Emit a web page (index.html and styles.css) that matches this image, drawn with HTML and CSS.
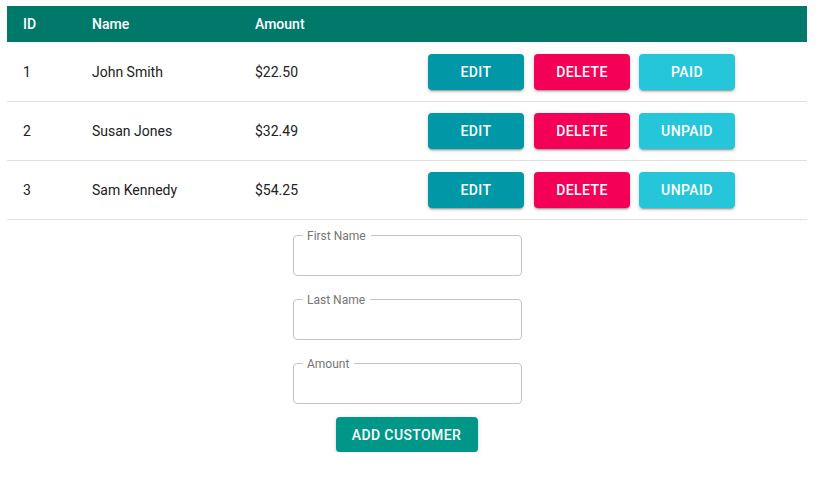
FILE: index.html
```
<!DOCTYPE html>
<html>
<head>
<meta charset="utf-8">
<link rel="stylesheet" href="styles.css">
</head>
<body>
<div class="page">
  <table class="grid">
    <thead>
      <tr><th class="c-id">ID</th><th class="c-name">Name</th><th class="c-amt">Amount</th><th class="c-act"></th></tr>
    </thead>
    <tbody>
      <tr><td>1</td><td>John Smith</td><td>$22.50</td><td><div class="actions"><button class="btn edit">Edit</button><button class="btn del">Delete</button><button class="btn paid">Paid</button></div></td></tr>
      <tr><td>2</td><td>Susan Jones</td><td>$32.49</td><td><div class="actions"><button class="btn edit">Edit</button><button class="btn del">Delete</button><button class="btn paid">Unpaid</button></div></td></tr>
      <tr><td>3</td><td>Sam Kennedy</td><td>$54.25</td><td><div class="actions"><button class="btn edit">Edit</button><button class="btn del">Delete</button><button class="btn paid">Unpaid</button></div></td></tr>
    </tbody>
  </table>
  <form class="form">
    <fieldset class="field"><legend>First Name</legend><input type="text"></fieldset>
    <fieldset class="field"><legend>Last Name</legend><input type="text"></fieldset>
    <fieldset class="field"><legend>Amount</legend><input type="text"></fieldset>
    <button type="button" class="btn add">Add Customer</button>
  </form>
</div>
</body>
</html>
```
FILE: styles.css
```
* { box-sizing: border-box; }
html, body { margin: 0; background: #fff; }
body { font-family: Roboto, "Noto Sans", sans-serif; color: #212121; }
.page { padding: 6px 24px 0 7px; }
.grid { width: 800px; border-collapse: collapse; font-size: 14px; }
.grid th { background: #00796b; color: #fff; font-weight: 500; text-align: left; height: 36px; padding: 0 16px; }
.c-id { width: 69px; }
.c-name { width: 163px; }
.c-amt { width: 173px; }
.grid td { height: 59px; padding: 0 16px; border-bottom: 1px solid #e0e0e0; }
.grid tbody tr:first-child td { padding-top: 2px; }
.actions { display: flex; gap: 10px; }
.btn { font-family: Roboto, sans-serif; font-size: 14px; font-weight: 500; text-transform: uppercase; letter-spacing: 0.4px; color: #fff; border: 0; border-radius: 4px; height: 36px; width: 96px; padding: 0; box-shadow: 0 3px 1px -2px rgba(0,0,0,.2), 0 2px 2px 0 rgba(0,0,0,.14), 0 1px 5px 0 rgba(0,0,0,.12); }
.edit { background: #0097a7; }
.del { background: #f50057; }
.paid { background: #26c6da; width: 96px; margin-left: -1px; }
.form { display: flex; flex-direction: column; align-items: center; padding-top: 9px; gap: 17px; margin-left: 1px; }
.field { width: 229px; margin: 0; padding: 0 0 0 9px; border: 1px solid #c4c4c4; border-radius: 4px; }
.field legend { font-size: 12px; line-height: 14px; color: #757575; padding: 0 5px 0 4px; }
.field input { display: block; width: 100%; height: 32px; border: 0; outline: 0; padding: 0; background: transparent; }
.add { background: #009688; width: 142px; height: 35px; margin-top: -4px; margin-left: -2px; padding-top: 2px; }
```
